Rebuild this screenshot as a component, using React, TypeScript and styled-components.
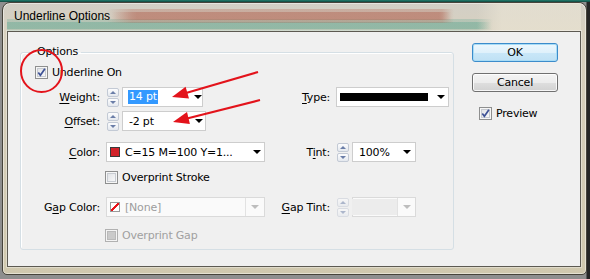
import React from "react";
import styled, { createGlobalStyle } from "styled-components";

const GlobalStyle = createGlobalStyle`
  html, body {
    margin: 0;
    padding: 0;
    background: #2b2b2b;
  }
  body {
    font-family: "DejaVu Sans", Verdana, sans-serif;
  }
`;

const Screen = styled.div`
  position: relative;
  width: 590px;
  height: 279px;
  box-sizing: border-box;
  padding: 2px 3px 4px 2px;
  display: flex;
  background:
    linear-gradient(to bottom, #23806f 0, #12463f 2px, transparent 2px),
    linear-gradient(to right, #8e8e8e 0, #8e8e8e 586px, #262626 587px);
`;

const Window = styled.div`
  flex: 1;
  display: flex;
  flex-direction: column;
  border: 1px solid #47443b;
  border-radius: 8px 8px 5px 5px;
  padding: 0 5px 7px 4px;
  background: linear-gradient(to bottom, #d2cfc6 0, #d8d1bf 30px, #d0c8ae 100%);
  box-shadow: inset 0 0 0 1px rgba(255, 255, 255, 0.45);
`;

const TitleBar = styled.div`
  height: 28px;
  box-sizing: border-box;
  display: flex;
  align-items: center;
  padding: 0 0 2px 7px;
  font-family: "Liberation Sans", Arial, sans-serif;
  font-size: 12px;
  color: #000;
  background:
    linear-gradient(to right, transparent 100px, rgba(176, 96, 78, 0.3) 125px, rgba(176, 96, 78, 0.3) 435px, transparent 447px) 0 6px / 100% 14px no-repeat,
    linear-gradient(to right, transparent 105px, rgba(172, 88, 70, 0.4) 130px, rgba(172, 88, 70, 0.4) 432px, transparent 444px) 0 9px / 100% 8px no-repeat,
    linear-gradient(to right, rgba(84, 162, 142, 0.25) 0, rgba(84, 162, 142, 0.25) 470px, transparent 486px) 0 16px / 100% 12px no-repeat,
    linear-gradient(to right, rgba(80, 160, 138, 0.35) 0, rgba(80, 160, 138, 0.35) 470px, transparent 484px) 0 19px / 100% 7px no-repeat,
    linear-gradient(to right, transparent 470px, rgba(236, 230, 214, 0.6) 495px) 0 0 / 100% 100% no-repeat;
`;

const Client = styled.div`
  flex: 1;
  display: flex;
  align-items: flex-start;
  border: 1px solid #5d5a52;
  background: #f0f0f0;
  box-shadow: 0 0 0 1px rgba(255, 255, 255, 0.35);
  font-size: 11px;
  letter-spacing: -0.2px;
  color: #000;
`;

const GroupBox = styled.fieldset`
  box-sizing: border-box;
  width: 434px;
  min-inline-size: 0;
  margin: 14px 0 0 12px;
  padding: 0 0 7px 0;
  border: 1px solid #d5dfe5;
  border-radius: 3px;
  box-shadow: inset 1px 1px 0 #fff;
`;

const Legend = styled.legend`
  margin-left: 13px;
  padding: 0 3px;
  line-height: 12px;
  font-size: 11px;
`;

const Rows = styled.div`
  display: flex;
  flex-direction: column;
`;

const Row = styled.div<{ $top: number; $h: number }>`
  display: grid;
  grid-template-columns: 85px 164px 66px 1fr;
  align-items: center;
  height: ${(p) => p.$h}px;
  margin-top: ${(p) => p.$top}px;
`;

const WideCell = styled.div<{ $indent: number }>`
  grid-column: 1 / -1;
  padding-left: ${(p) => p.$indent}px;
  display: flex;
  align-items: center;
`;

const Label = styled.span`
  justify-self: end;
  padding-right: 6px;
  white-space: nowrap;
`;

const Key = styled.span`
  text-decoration: underline;
  text-underline-offset: 2px;
`;

const Cell = styled.div<{ $shift?: number; $col?: number }>`
  display: flex;
  align-items: center;
  gap: 3px;
  margin-left: ${(p) => p.$shift ?? 0}px;
  ${(p) => (p.$col ? `grid-column: ${p.$col};` : "")}
`;

const Combo = styled.div<{ $w: number; $pad: number; $disabled?: boolean }>`
  box-sizing: border-box;
  width: ${(p) => p.$w}px;
  height: 20px;
  display: flex;
  align-items: center;
  padding-left: ${(p) => p.$pad}px;
  background: ${(p) => (p.$disabled ? "#fafafa" : "#fff")};
  border: 1px solid ${(p) => (p.$disabled ? "#dadada" : "#cdcdcd")};
  color: ${(p) => (p.$disabled ? "#9d9d9d" : "#000")};
`;

const ComboText = styled.span`
  flex: 1;
  display: flex;
  align-items: center;
  gap: 5px;
  white-space: nowrap;
  overflow: hidden;
  height: 100%;
`;

const Grayed = styled.span`
  flex: 1;
  align-self: stretch;
  background: #ececec;
  margin: 1px 0 1px -2px;
`;

const ArrowZone = styled.span<{ $w: number; $split?: boolean }>`
  width: ${(p) => p.$w}px;
  align-self: stretch;
  display: flex;
  align-items: center;
  justify-content: center;
  border-left: ${(p) => (p.$split ? "1px solid #e2e2e2" : "none")};
`;

const Caret = styled.span<{ $disabled?: boolean }>`
  width: 0;
  height: 0;
  border-left: 4px solid transparent;
  border-right: 4px solid transparent;
  border-top: 4px solid ${(p) => (p.$disabled ? "#bdbdbd" : "#000")};
`;

const Selected = styled.span`
  background: #3399ff;
  color: #fff;
  padding: 1px 1px;
  line-height: 12px;
`;

const LineSample = styled.span`
  width: 88px;
  height: 8px;
  background: #000;
`;

const Swatch = styled.span<{ $none?: boolean }>`
  box-sizing: border-box;
  flex: none;
  width: 10px;
  height: 10px;
  border: 1px solid ${(p) => (p.$none ? "#9a9a9a" : "#3a3a3a")};
  background: ${(p) =>
    p.$none
      ? "linear-gradient(to bottom right, #fff 0, #fff 38%, #e8141b 38%, #e8141b 62%, #fff 62%)"
      : "#d2232a"};
`;

const Spinner = styled.div<{ $disabled?: boolean }>`
  box-sizing: border-box;
  width: 12px;
  height: 19px;
  display: flex;
  flex-direction: column;
  gap: 1px;
  opacity: ${(p) => (p.$disabled ? 0.5 : 1)};
`;

const SpinHalf = styled.span`
  flex: 1;
  box-sizing: border-box;
  border: 1px solid #c3cad5;
  border-radius: 2px;
  background: linear-gradient(#fdfdfe, #e4e8ee);
  display: flex;
  align-items: center;
  justify-content: center;
`;

const SpinTri = styled.span<{ $down?: boolean }>`
  width: 0;
  height: 0;
  border-left: 3px solid transparent;
  border-right: 3px solid transparent;
  ${(p) => (p.$down ? "border-top" : "border-bottom")}: 3px solid #6b7ea8;
`;

const CheckRow = styled.label<{ $muted?: boolean }>`
  display: flex;
  align-items: center;
  gap: 4px;
  white-space: nowrap;
  color: ${(p) => (p.$muted ? "#a0a0a0" : "#000")};
`;

const Box = styled.span<{ $disabled?: boolean }>`
  box-sizing: border-box;
  flex: none;
  width: 13px;
  height: 13px;
  border: 1px solid ${(p) => (p.$disabled ? "#b1b1b1" : "#8e8f8f")};
  background: ${(p) =>
    p.$disabled ? "#f4f4f4" : "linear-gradient(135deg, #dcdee2, #fdfdfd)"};
  box-shadow: ${(p) =>
    p.$disabled
      ? "inset 0 0 0 1px #f4f4f4, inset 0 0 0 2px #b9b9b9, inset 0 0 0 6px #cacaca"
      : "inset 0 0 0 1px #f6f6f6, inset 0 0 0 2px #c7cbd1"};
  display: flex;
  align-items: center;
  justify-content: center;
`;

const Actions = styled.div`
  width: 86px;
  margin: 11px 0 0 18px;
  display: flex;
  flex-direction: column;
`;

const Button = styled.button<{ $primary?: boolean; $top?: number }>`
  box-sizing: border-box;
  height: 19px;
  margin-top: ${(p) => p.$top ?? 0}px;
  padding: 0;
  font-family: "DejaVu Sans", Verdana, sans-serif;
  font-size: 11px;
  letter-spacing: -0.2px;
  color: #000;
  border-radius: 3px;
  border: 1px solid ${(p) => (p.$primary ? "#3c8ccb" : "#707070")};
  background: ${(p) =>
    p.$primary
      ? "linear-gradient(#edf7fd 0, #dff1fb 50%, #c9e7f8 51%, #bfe1f4 100%)"
      : "linear-gradient(#f4f4f4 0, #ececec 50%, #dedede 51%, #d2d2d2 100%)"};
  box-shadow: inset 0 0 0 1px ${(p) => (p.$primary ? "#a8dcf6" : "rgba(255,255,255,0.8)")};
`;

const PreviewRow = styled.div`
  margin-top: 15px;
  padding-left: 7px;
`;

const Overlay = styled.svg`
  position: absolute;
  left: 0;
  top: 0;
  pointer-events: none;
`;

const Check = () => (
  <svg width="11" height="11" viewBox="0 0 11 11">
    <path d="M2.3 5.4 L4.4 8.3 L8.9 1.8" fill="none" stroke="#3e5296" strokeWidth="1.7" />
  </svg>
);

const CheckBox = ({ checked, disabled, label }: { checked?: boolean; disabled?: boolean; label: string }) => (
  <CheckRow $muted={disabled}>
    <Box $disabled={disabled}>{checked && <Check />}</Box>
    {label}
  </CheckRow>
);

const Spin = ({ disabled }: { disabled?: boolean }) => (
  <Spinner $disabled={disabled}>
    <SpinHalf>
      <SpinTri />
    </SpinHalf>
    <SpinHalf>
      <SpinTri $down />
    </SpinHalf>
  </Spinner>
);

export default function App() {
  return (
    <>
      <GlobalStyle />
      <Screen>
        <Window>
          <TitleBar>Underline Options</TitleBar>
          <Client>
            <GroupBox>
              <Legend>Options</Legend>
              <Rows>
                <Row $top={7} $h={14}>
                  <WideCell $indent={14}>
                    <CheckBox checked label="Underline On" />
                  </WideCell>
                </Row>

                <Row $top={8} $h={20}>
                  <Label>
                    <Key>W</Key>eight:
                  </Label>
                  <Cell $shift={1}>
                    <Spin />
                    <Combo $w={81} $pad={5}>
                      <ComboText>
                        <Selected>14 pt</Selected>
                      </ComboText>
                      <ArrowZone $w={9}>
                        <Caret />
                      </ArrowZone>
                    </Combo>
                  </Cell>
                  <Label>
                    <Key>T</Key>ype:
                  </Label>
                  <Cell>
                    <Combo $w={113} $pad={3}>
                      <ComboText>
                        <LineSample />
                      </ComboText>
                      <ArrowZone $w={14}>
                        <Caret />
                      </ArrowZone>
                    </Combo>
                  </Cell>
                </Row>

                <Row $top={4} $h={20}>
                  <Label>
                    <Key>O</Key>ffset:
                  </Label>
                  <Cell $shift={1}>
                    <Spin />
                    <Combo $w={84} $pad={6}>
                      <ComboText>-2 pt</ComboText>
                      <ArrowZone $w={12}>
                        <Caret />
                      </ArrowZone>
                    </Combo>
                  </Cell>
                </Row>

                <Row $top={11} $h={20}>
                  <Label>
                    <Key>C</Key>olor:
                  </Label>
                  <Cell>
                    <Combo $w={159} $pad={3}>
                      <ComboText>
                        <Swatch />
                        C=15 M=100 Y=1...
                      </ComboText>
                      <ArrowZone $w={14}>
                        <Caret />
                      </ArrowZone>
                    </Combo>
                  </Cell>
                  <Label>
                    T<Key>i</Key>nt:
                  </Label>
                  <Cell $shift={1}>
                    <Spin />
                    <Combo $w={64} $pad={6}>
                      <ComboText>100%</ComboText>
                      <ArrowZone $w={16}>
                        <Caret />
                      </ArrowZone>
                    </Combo>
                  </Cell>
                </Row>

                <Row $top={8} $h={14}>
                  <Cell $col={2} $shift={-1}>
                    <CheckBox label="Overprint Stroke" />
                  </Cell>
                </Row>

                <Row $top={13} $h={20}>
                  <Label>
                    G<Key>a</Key>p Color:
                  </Label>
                  <Cell>
                    <Combo $w={159} $pad={3} $disabled>
                      <ComboText>
                        <Swatch $none />
                        [None]
                      </ComboText>
                      <ArrowZone $w={18} $split>
                        <Caret $disabled />
                      </ArrowZone>
                    </Combo>
                  </Cell>
                  <Label>
                    <Key>G</Key>ap Tint:
                  </Label>
                  <Cell $shift={1}>
                    <Spin disabled />
                    <Combo $w={64} $pad={1} $disabled>
                      <Grayed />
                      <ArrowZone $w={17} $split>
                        <Caret $disabled />
                      </ArrowZone>
                    </Combo>
                  </Cell>
                </Row>

                <Row $top={11} $h={14}>
                  <Cell $col={2} $shift={-1}>
                    <CheckBox disabled label="Overprint Gap" />
                  </Cell>
                </Row>
              </Rows>
            </GroupBox>

            <Actions>
              <Button $primary>OK</Button>
              <Button $top={11}>Cancel</Button>
              <PreviewRow>
                <CheckBox checked label="Preview" />
              </PreviewRow>
            </Actions>
          </Client>
        </Window>

        <Overlay width="590" height="279" viewBox="0 0 590 279">
          <ellipse cx="41.5" cy="71" rx="20.5" ry="21" fill="none" stroke="#e3131b" strokeWidth="2" />
          <line x1="258" y1="72" x2="186" y2="93" stroke="#e3131b" strokeWidth="2.2" />
          <polygon points="172,97 189,98.5 185.6,86.8" fill="#e3131b" />
          <line x1="260" y1="100" x2="187" y2="118.5" stroke="#e3131b" strokeWidth="2.2" />
          <polygon points="173,122 189.9,124 187,112.1" fill="#e3131b" />
        </Overlay>
      </Screen>
    </>
  );
}
